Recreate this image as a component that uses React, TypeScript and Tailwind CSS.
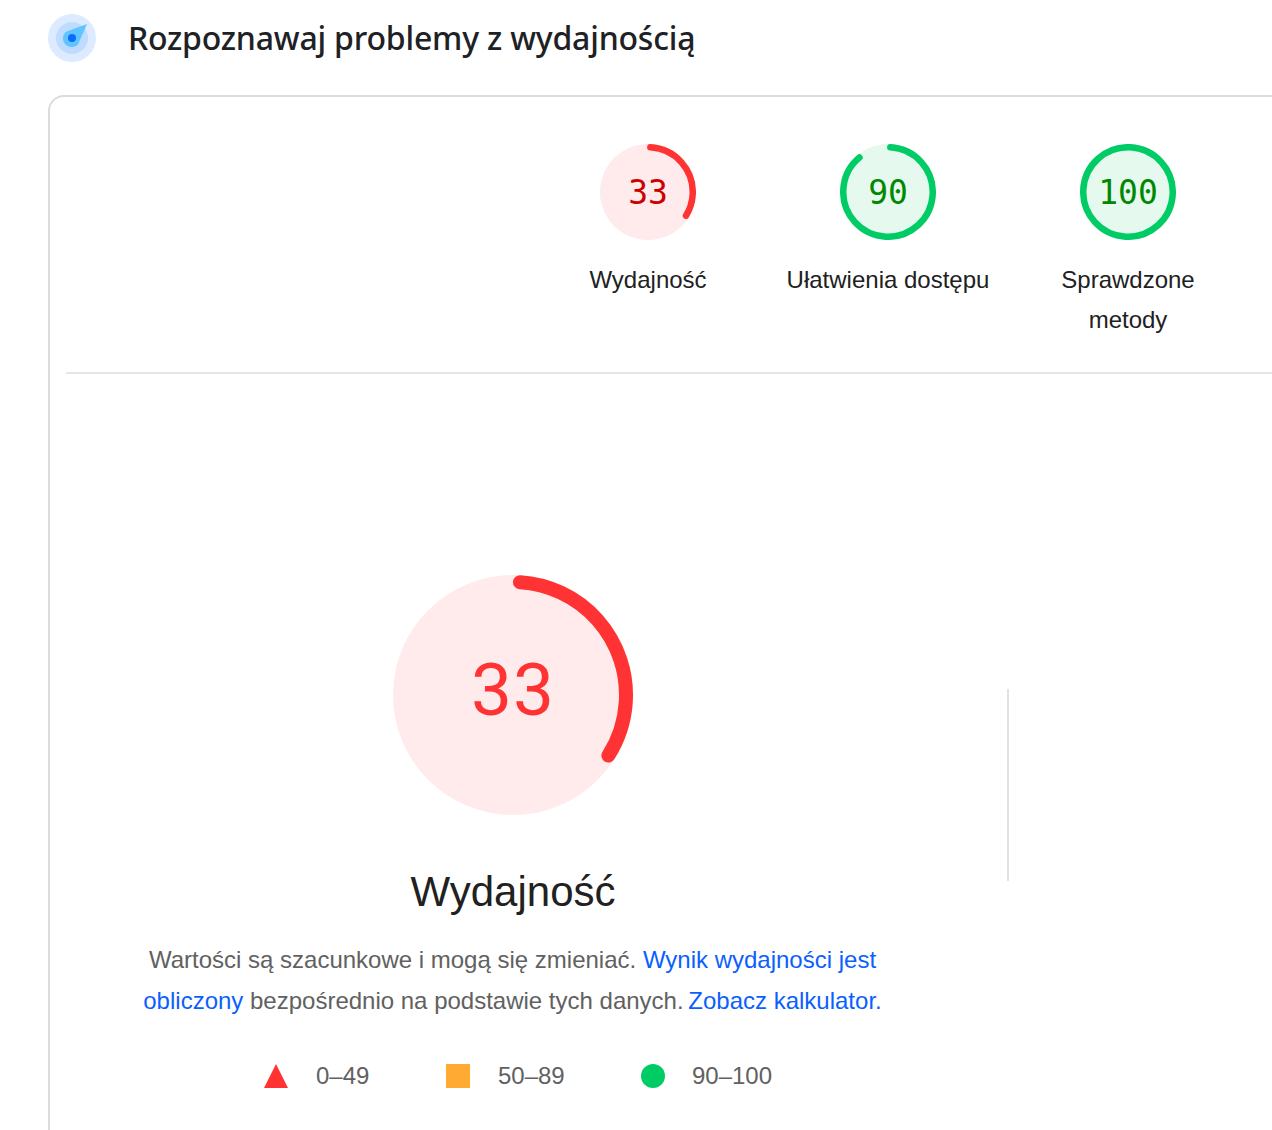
import React from "react";

const sans = "font-['Liberation_Sans',Arial,sans-serif]";

function Gauge({ size, stroke, pct, start, color, bg, text, textColor, textClass }: { size: number; stroke: number; pct: number; start: number; color: string; bg: string; text: string; textColor: string; textClass: string }) {
  const c = size / 2;
  const r = c - stroke / 2;
  const circ = 2 * Math.PI * r;
  return (
    <div className={`relative shrink-0 flex items-center justify-center ${textClass}`} style={{ width: size, height: size, color: textColor }}>
      <svg className="absolute inset-0" width={size} height={size} viewBox={`0 0 ${size} ${size}`}>
        <circle cx={c} cy={c} r={c} fill={bg} />
        <circle cx={c} cy={c} r={r} fill="none" stroke={color} strokeWidth={stroke} strokeLinecap="round" strokeDasharray={`${circ * pct} ${circ}`} transform={`rotate(${start} ${c} ${c})`} />
      </svg>
      <span className="relative">{text}</span>
    </div>
  );
}

function Cat({ pct, color, bg, text, textColor, label }: { pct: number; color: string; bg: string; text: string; textColor: string; label: React.ReactNode }) {
  return (
    <div className="w-[240px] flex flex-col items-center shrink-0">
      <Gauge size={96} stroke={6.5} pct={pct} start={-87} color={color} bg={bg} text={text} textColor={textColor} textClass="font-['DejaVu_Sans_Mono',monospace] text-[33px] font-extralight pt-[1px]" />
      <div className="mt-5 text-[24px] leading-[40px] text-[#212121] text-center">{label}</div>
    </div>
  );
}

export default function App() {
  return (
    <div className={`w-[1272px] h-[1130px] overflow-hidden bg-white ${sans}`}>
      <div className="flex items-center h-[76px] pl-12">
        <svg width="48" height="48" viewBox="0 0 48 48" className="shrink-0">
          <circle cx="24" cy="24" r="24" fill="#dcebff" />
          <circle cx="24" cy="24" r="16" fill="#bfdcff" />
          <path d="M17.5 18 L39 10 L30 30.5 A8.5 8.5 0 0 1 17.5 18 Z" fill="#5fc4ff" />
          <circle cx="24" cy="24" r="4" fill="#0b6cf5" />
        </svg>
        <h1 className="ml-[32px] text-[32px] font-medium text-[#202124] font-['Noto_Sans',sans-serif] tracking-[-0.2px]">Rozpoznawaj problemy z wydajnością</h1>
      </div>
      <div className="mt-[19px] ml-12 w-[1400px] h-[1100px] border-2 border-[#dadce0] rounded-2xl pl-4">
        <div className="flex pt-[47px] pl-[462px] h-[277px] border-b-2 border-[#e4e5e7]">
          <Cat pct={0.33} color="#ff3333" bg="#ffebeb" text="33" textColor="#cc0000" label="Wydajność" />
          <Cat pct={0.88} color="#00cc66" bg="#e6f9ef" text="90" textColor="#008800" label="Ułatwienia dostępu" />
          <Cat pct={1} color="#00cc66" bg="#e6f9ef" text="100" textColor="#008800" label={<>Sprawdzone<br />metody</>} />
        </div>
        <div className="flex">
          <div className="w-[894px] flex flex-col items-center pt-[201px]">
            <Gauge size={240} stroke={14} pct={0.33} start={-86.5} color="#ff3333" bg="#ffebeb" text="33" textColor="#ff3333" textClass="font-['Roboto',sans-serif] font-normal text-[73px] tracking-[1px] pb-[9px]" />
            <div className="mt-[49px] text-[42px] leading-[56px] text-[#212121]">Wydajność</div>
            <p className="mt-[19px] w-[760px] pr-[1px] text-center text-[24px] leading-[41px] text-[#616161]">
              Wartości są szacunkowe i mogą się zmieniać. <span className="text-[#0b5fff]">Wynik wydajności jest obliczony</span> bezpośrednio na podstawie tych danych. <span className="text-[#0b5fff] -ml-0.5">Zobacz kalkulator.</span>
            </p>
            <div className="mt-[38px] flex items-center text-[24px] leading-[34px] text-[#616161] pl-[10px]">
              <svg width="24" height="24" viewBox="0 0 24 24"><path d="M12 0 L24 24 H0 Z" fill="#ff3333" /></svg>
              <span className="ml-[28px] w-[130px]">0–49</span>
              <div className="w-6 h-6 bg-[#ffaa33]" />
              <span className="ml-[28px] w-[143px]">50–89</span>
              <div className="w-6 h-6 rounded-full bg-[#00cc66]" />
              <span className="ml-[27px]">90–100</span>
            </div>
          </div>
          <div className="ml-[47px] mt-[315px] w-[2px] h-[192px] bg-[#dfe1e5]" />
        </div>
      </div>
    </div>
  );
}
